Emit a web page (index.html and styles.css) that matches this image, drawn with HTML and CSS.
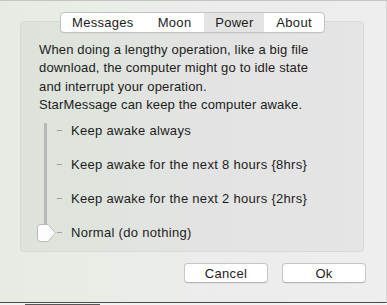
FILE: index.html
```html
<!DOCTYPE html>
<html>
<head>
<meta charset="utf-8">
<link rel="stylesheet" href="styles.css">
</head>
<body>
<div class="window">
  <div class="group">
    <div class="tabs">
      <div class="tab tab-wide">Messages</div>
      <div class="tab">Moon</div>
      <div class="tab selected">Power</div>
      <div class="tab">About</div>
    </div>
    <p class="desc">When doing a lengthy operation, like a big file<br>download, the computer might go to idle state<br>and interrupt your operation.<br>StarMessage can keep the computer awake.</p>
    <div class="slider">
      <div class="track-col">
        <div class="track"></div>
        <svg class="knob" width="20" height="18" viewBox="0 0 20 18">
          <path d="M3.5 0.5 H11 L18.5 9 L11 17.5 H3.5 Q0.5 17.5 0.5 14.5 V3.5 Q0.5 0.5 3.5 0.5 Z" fill="#fdfdfd" stroke="#b9b9b9" stroke-width="1"/>
        </svg>
      </div>
      <ul class="options">
        <li class="option"><span class="tick"></span>Keep awake always</li>
        <li class="option"><span class="tick"></span>Keep awake for the next 8 hours {8hrs}</li>
        <li class="option"><span class="tick"></span>Keep awake for the next 2 hours {2hrs}</li>
        <li class="option"><span class="tick"></span>Normal (do nothing)</li>
      </ul>
    </div>
  </div>
  <div class="buttons">
    <button class="btn">Cancel</button>
    <button class="btn">Ok</button>
  </div>
</div>
<div class="below"></div>
</body>
</html>
```
FILE: styles.css
```css
html, body {
  margin: 0;
  padding: 0;
}
body {
  width: 387px;
  height: 305px;
  overflow: hidden;
  background: #f1f1f1;
  font-family: "Liberation Sans", Arial, sans-serif;
  font-size: 13px;
  letter-spacing: 0.3px;
  color: #1c1c1c;
}
.window {
  height: 303px;
  box-sizing: border-box;
  border-top: 1px solid #c4c4c4;
  border-bottom: 1px solid #4a4a4a;
  border-right: 1px solid #d6d6d6;
  background: linear-gradient(90deg, #e6ece4 0%, #e8ede6 25%, #ececec 55%, #eeeeee 100%);
  padding-top: 20px;
}
.group {
  margin: 0 22px 0 20px;
  height: 231px;
  box-sizing: border-box;
  border: 1px solid #d9d9d9;
  border-radius: 4px;
  background: rgba(0, 0, 0, 0.035);
  padding: 0 0 0 18px;
}
.tabs {
  display: flex;
  width: 265px;
  height: 21px;
  box-sizing: border-box;
  margin: -10px 0 0 21px;
  border: 1px solid #c2c2c2;
  border-radius: 4px;
  background: #ffffff;
  overflow: hidden;
  box-shadow: 0 0.5px 0.5px rgba(0,0,0,0.08);
}
.tab {
  width: 60px;
  line-height: 19px;
  text-align: center;
}
.tab-wide {
  width: 84px;
}
.tab.selected {
  background: #e4e4e4;
}
.desc {
  margin: 8px 0 0 0;
  line-height: 18.3px;
  letter-spacing: 0.15px;
  white-space: nowrap;
}
.slider {
  display: flex;
  margin-top: 7px;
}
.track-col {
  position: relative;
  width: 18px;
  flex: none;
}
.track {
  margin: 2px 0 0 5px;
  width: 3px;
  height: 102px;
  background: #b7b7b7;
  border-radius: 1px;
}
.knob {
  position: absolute;
  left: -2px;
  top: 103px;
}
.options {
  list-style: none;
  margin: 0;
  padding: 0;
}
.option {
  display: flex;
  align-items: center;
  height: 18px;
  margin-top: 16px;
}
.option:first-child {
  margin-top: 0;
}
.tick {
  display: inline-block;
  width: 5px;
  height: 1px;
  background: #9e9e9e;
  margin-right: 9px;
}
.buttons {
  display: flex;
  justify-content: flex-end;
  gap: 14px;
  margin: 11px 20px 0 0;
}
.btn {
  width: 84px;
  height: 20px;
  padding: 0;
  font-family: "Liberation Sans", Arial, sans-serif;
  font-size: 13px;
  letter-spacing: 0.3px;
  color: #1c1c1c;
  background: #ffffff;
  border: 1px solid #c6c6c6;
  border-bottom-color: #b4b4b4;
  border-radius: 4px;
  box-shadow: 0 0.5px 0.5px rgba(0,0,0,0.08);
}
.below {
  height: 2px;
  background:
    linear-gradient(90deg, transparent 0 25px, #555 25px 100px, transparent 100px) no-repeat,
    #f3f3f3;
  background-size: 100% 1px;
  background-position: 0 1px;
}
```
